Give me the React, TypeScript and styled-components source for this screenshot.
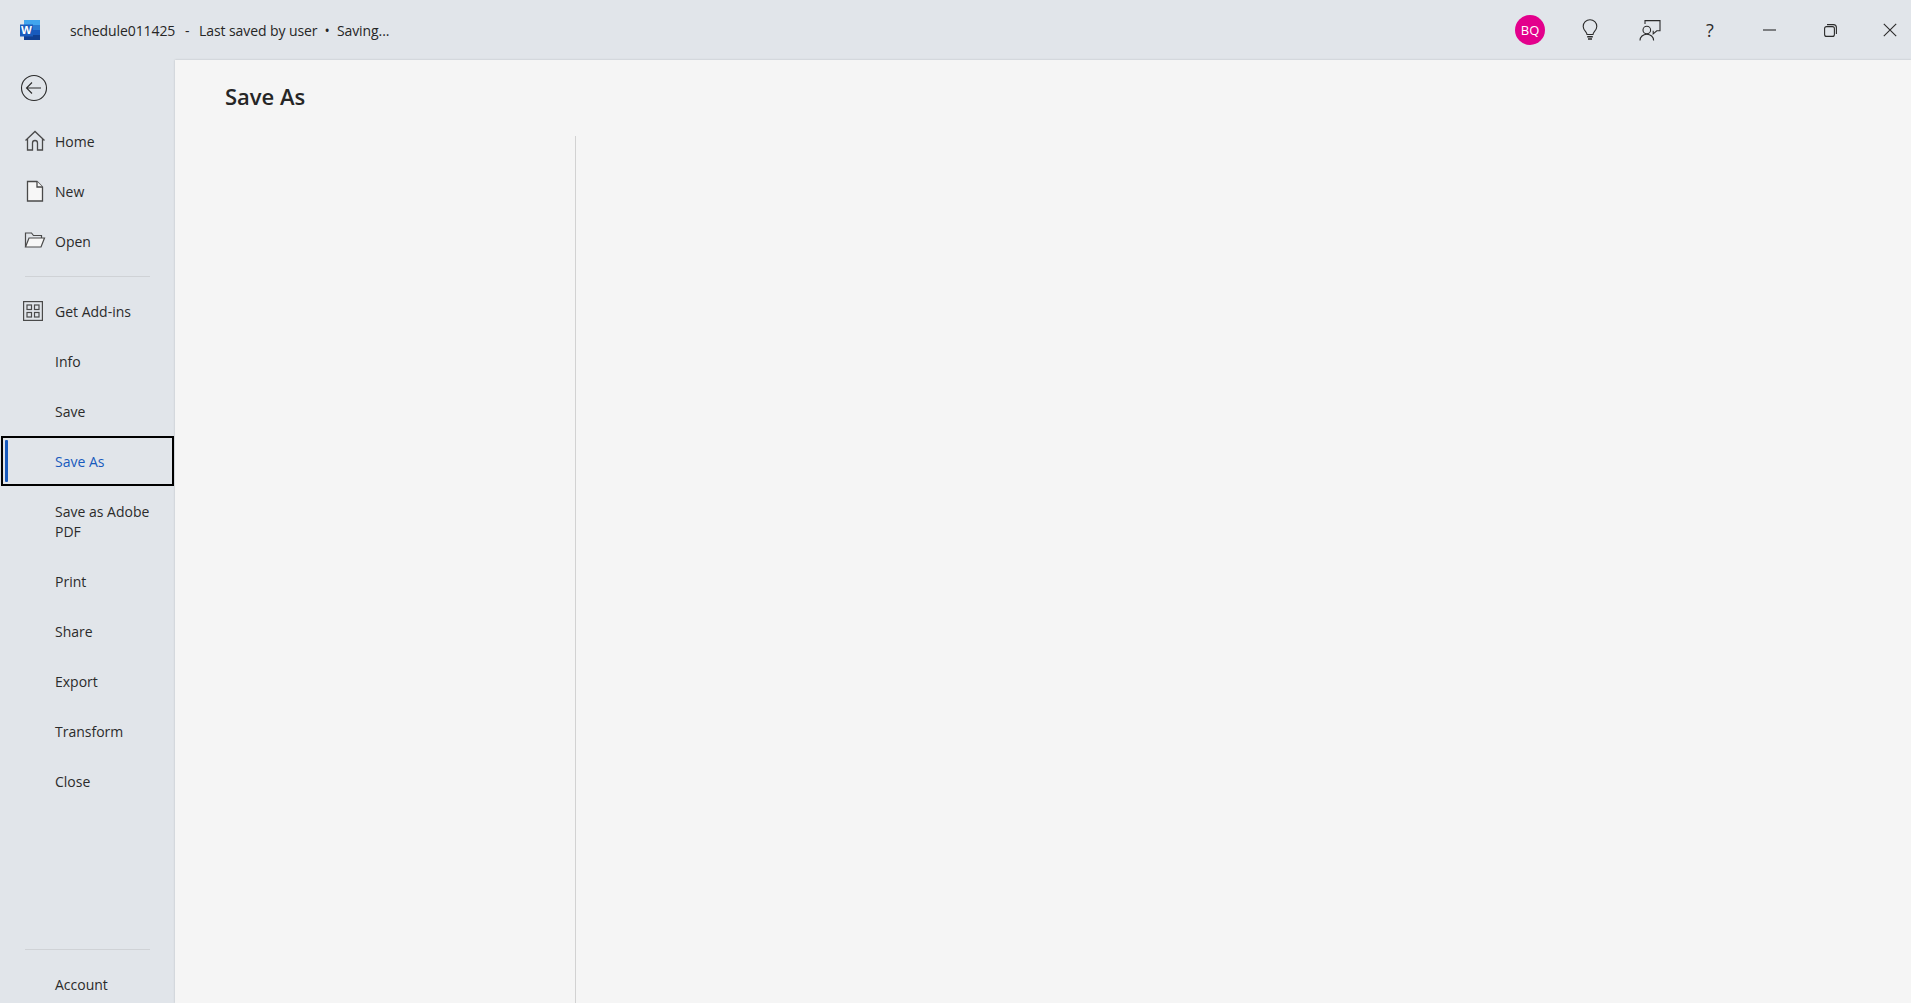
import styled, { createGlobalStyle } from "styled-components";

const CHROME = "#e1e5ea";
const PAPER = "#f5f5f5";
const INK = "#2b2b2b";
const BLUE = "#185abd";

const GlobalStyle = createGlobalStyle`
  html, body {
    margin: 0;
    height: 100%;
    overflow: hidden;
    background: ${CHROME};
  }
  #root {
    height: 100%;
  }
`;

const Window = styled.div`
  height: 1003px;
  display: flex;
  flex-direction: column;
  overflow: hidden;
  background: ${CHROME};
  color: ${INK};
  font-family: "Open Sans", "Noto Sans", Arial, sans-serif;
`;

const TitleBar = styled.header`
  flex: none;
  height: 60px;
  display: flex;
  align-items: center;
  padding-left: 20px;
`;

const TitleText = styled.div`
  margin-left: 30px;
  display: flex;
  font-size: 14px;
  letter-spacing: -0.08px;
  white-space: pre;
  color: #262626;
`;

const DashSeparator = styled.span`
  margin: 0 2.5px;
`;

const TitleActions = styled.div`
  margin-left: auto;
  padding-right: 1px;
  display: flex;
  align-items: center;
  gap: 20px;
`;

const ActionSlot = styled.div`
  width: 40px;
  height: 60px;
  display: flex;
  align-items: center;
  justify-content: center;
  color: #2b2b2b;
`;

const Avatar = styled.div`
  width: 30px;
  height: 30px;
  border-radius: 50%;
  background: #e3008c;
  color: #fff;
  font-size: 13px;
  display: flex;
  align-items: center;
  justify-content: center;
`;

const HelpMark = styled.span`
  font-size: 18px;
  line-height: 1;
`;

const Body = styled.div`
  flex: 1;
  min-height: 0;
  display: flex;
`;

const Sidebar = styled.nav`
  flex: none;
  width: 175px;
  display: flex;
  flex-direction: column;
  overflow: hidden;
`;

const BackRow = styled.div`
  flex: none;
  height: 56px;
  display: flex;
  align-items: center;
  padding-left: 20px;
  box-sizing: border-box;
`;

const NavItem = styled.div<{ $selected?: boolean; $tall?: boolean }>`
  flex: none;
  position: relative;
  box-sizing: border-box;
  height: ${({ $tall }) => ($tall ? "70px" : "50px")};
  padding: 2px 16px 0 55px;
  display: flex;
  align-items: center;
  font-size: 14px;
  line-height: 20px;
  color: ${({ $selected }) => ($selected ? BLUE : INK)};
  ${({ $selected }) =>
    $selected &&
    `
    margin: 0 1px;
    padding-left: 54px;
    outline: 2px solid #000;
    outline-offset: -2px;
  `}
`;

const SelectedBar = styled.span`
  position: absolute;
  left: 4px;
  top: 4px;
  bottom: 4px;
  width: 3px;
  border-radius: 1px;
  background: ${BLUE};
`;

const NavIcon = styled.span<{ $left?: number }>`
  position: absolute;
  left: ${({ $left }) => $left ?? 24}px;
  top: 50%;
  width: 22px;
  height: 22px;
  transform: translateY(-50%);
  display: flex;
`;

const Rule = styled.div<{ $top: number; $bottom: number }>`
  flex: none;
  height: 1px;
  margin: ${({ $top, $bottom }) => `${$top}px 25px ${$bottom}px`};
  background: #cfd2d6;
`;

const Content = styled.main`
  flex: 1;
  min-width: 0;
  display: flex;
  flex-direction: column;
  background: ${PAPER};
  box-shadow: 0 0 2px rgba(0, 0, 0, 0.18);
`;

const PageTitle = styled.h1`
  flex: none;
  margin: 0;
  height: 76px;
  box-sizing: border-box;
  padding: 19px 0 0 50px;
  font-size: 22px;
  line-height: 34px;
  font-weight: 600;
  color: #262626;
`;

const Panes = styled.div`
  flex: 1;
  min-height: 0;
  display: flex;
`;

const LeftPane = styled.div`
  flex: none;
  width: 400px;
  border-right: 1px solid #d2d2d2;
`;

function WordLogo() {
  return (
    <svg width="20" height="20" viewBox="0 0 20 20" aria-hidden="true">
      <rect x="4" y="0" width="16" height="5" fill="#41a5ee" />
      <rect x="4" y="5" width="16" height="5" fill="#2b7cd3" />
      <rect x="4" y="10" width="16" height="5" fill="#185abd" />
      <rect x="4" y="15" width="16" height="5" fill="#103f91" />
      <rect x="0" y="4.5" width="13" height="12" fill="#1a5cbd" />
      <text x="6.5" y="14.4" textAnchor="middle" fill="#fff" fontFamily="'Liberation Sans', sans-serif" fontWeight="700" fontSize="11.5">W</text>
    </svg>
  );
}

function BackIcon() {
  return (
    <svg width="28" height="28" viewBox="0 0 28 28" fill="none" stroke="#2b2b2b" strokeWidth="1.1" aria-hidden="true">
      <circle cx="14" cy="14" r="12.5" />
      <path d="M6.5 14H21M12 8.5 6.5 14l5.5 5.5" />
    </svg>
  );
}

function HomeIcon() {
  return (
    <svg width="22" height="22" viewBox="0 0 22 22" fill="none" stroke="#4a4a4a" strokeWidth="1.3" aria-hidden="true">
      <path d="M1.5 10.5 11 1.5l9.5 9M3.5 9v11h5v-7a2.5 2.5 0 0 1 5 0v7h5V9" />
    </svg>
  );
}

function NewIcon() {
  return (
    <svg width="22" height="22" viewBox="0 0 22 22" fill="#f7f7f7" stroke="#4a4a4a" strokeWidth="1.3" aria-hidden="true">
      <path d="M3.5 1.5h9.5l5.5 5.5v14h-15z" />
      <path d="M13 1.5V7h5.5" />
    </svg>
  );
}

function OpenIcon() {
  return (
    <svg width="22" height="22" viewBox="0 0 22 22" fill="none" stroke="#4a4a4a" strokeWidth="1.2" aria-hidden="true">
      <path d="M1.5 17V3h6l2 2.5h8V8" />
      <path d="M1.5 17 5 8h15.5L17 17z" fill="#f7f7f7" />
    </svg>
  );
}

function AddInsIcon() {
  return (
    <svg width="22" height="22" viewBox="0 0 22 22" fill="none" stroke="#4a4a4a" strokeWidth="1.2" aria-hidden="true">
      <rect x="1.6" y="1.6" width="18.8" height="18.8" />
      <rect x="5" y="5" width="4.5" height="4.5" />
      <rect x="12.5" y="5" width="4.5" height="4.5" />
      <rect x="5" y="12.5" width="4.5" height="4.5" />
      <rect x="12.5" y="12.5" width="4.5" height="4.5" />
    </svg>
  );
}

function BulbIcon() {
  return (
    <svg width="16" height="22" viewBox="0 0 16 22" fill="none" stroke="#2b2b2b" strokeWidth="1.1" aria-hidden="true">
      <path d="M5 15.5c0-2.5-3.8-4-3.8-8a6.8 6.8 0 0 1 13.6 0c0 4-3.8 5.5-3.8 8z" />
      <path d="M5.2 17.7h5.6M6 20h4" strokeWidth="1.4" />
    </svg>
  );
}

function FeedbackIcon() {
  return (
    <svg width="22" height="21" viewBox="0 0 22 21" fill="none" stroke="#2b2b2b" strokeWidth="1.1" aria-hidden="true">
      <path d="M6 4V.6h15v10.2h-3.2l-3.6 3v-3" />
      <circle cx="7.8" cy="10" r="3.8" />
      <path d="M1 20.5c0-3.6 3-6.3 6.8-6.3s6.8 2.7 6.8 6.3" />
    </svg>
  );
}

function MinimizeIcon() {
  return (
    <svg width="14" height="2" viewBox="0 0 14 2" aria-hidden="true">
      <path d="M0 1h13" stroke="#2b2b2b" strokeWidth="1.1" />
    </svg>
  );
}

function RestoreIcon() {
  return (
    <svg width="13" height="13" viewBox="0 0 13 13" fill="none" stroke="#2b2b2b" strokeWidth="1.1" aria-hidden="true">
      <rect x=".6" y="2.6" width="9.8" height="9.8" rx="2" />
      <path d="M3 .6h6.4a3 3 0 0 1 3 3V10" />
    </svg>
  );
}

function CloseIcon() {
  return (
    <svg width="14" height="14" viewBox="0 0 14 14" aria-hidden="true">
      <path d="M.8.8l12.4 12.4M13.2.8.8 13.2" stroke="#2b2b2b" strokeWidth="1.1" />
    </svg>
  );
}

export default function App() {
  return (
    <Window>
      <GlobalStyle />
      <TitleBar>
        <WordLogo />
        <TitleText>
          <span>schedule011425</span>
          <DashSeparator>{"  -  "}</DashSeparator>
          <span>Last saved by user</span>
          <span>{"  •  "}</span>
          <span>Saving...</span>
        </TitleText>
        <TitleActions>
          <ActionSlot><Avatar>BQ</Avatar></ActionSlot>
          <ActionSlot><BulbIcon /></ActionSlot>
          <ActionSlot><FeedbackIcon /></ActionSlot>
          <ActionSlot><HelpMark>?</HelpMark></ActionSlot>
          <ActionSlot><MinimizeIcon /></ActionSlot>
          <ActionSlot><RestoreIcon /></ActionSlot>
          <ActionSlot><CloseIcon /></ActionSlot>
        </TitleActions>
      </TitleBar>
      <Body>
        <Sidebar>
          <BackRow><BackIcon /></BackRow>
          <NavItem><NavIcon><HomeIcon /></NavIcon>Home</NavItem>
          <NavItem><NavIcon><NewIcon /></NavIcon>New</NavItem>
          <NavItem><NavIcon><OpenIcon /></NavIcon>Open</NavItem>
          <Rule $top={10} $bottom={9} />
          <NavItem><NavIcon $left={22}><AddInsIcon /></NavIcon>Get Add-ins</NavItem>
          <NavItem>Info</NavItem>
          <NavItem>Save</NavItem>
          <NavItem $selected><SelectedBar />Save As</NavItem>
          <NavItem $tall>Save as Adobe PDF</NavItem>
          <NavItem>Print</NavItem>
          <NavItem>Share</NavItem>
          <NavItem>Export</NavItem>
          <NavItem>Transform</NavItem>
          <NavItem>Close</NavItem>
          <Rule $top={143} $bottom={9} />
          <NavItem>Account</NavItem>
        </Sidebar>
        <Content>
          <PageTitle>Save As</PageTitle>
          <Panes>
            <LeftPane />
          </Panes>
        </Content>
      </Body>
    </Window>
  );
}
